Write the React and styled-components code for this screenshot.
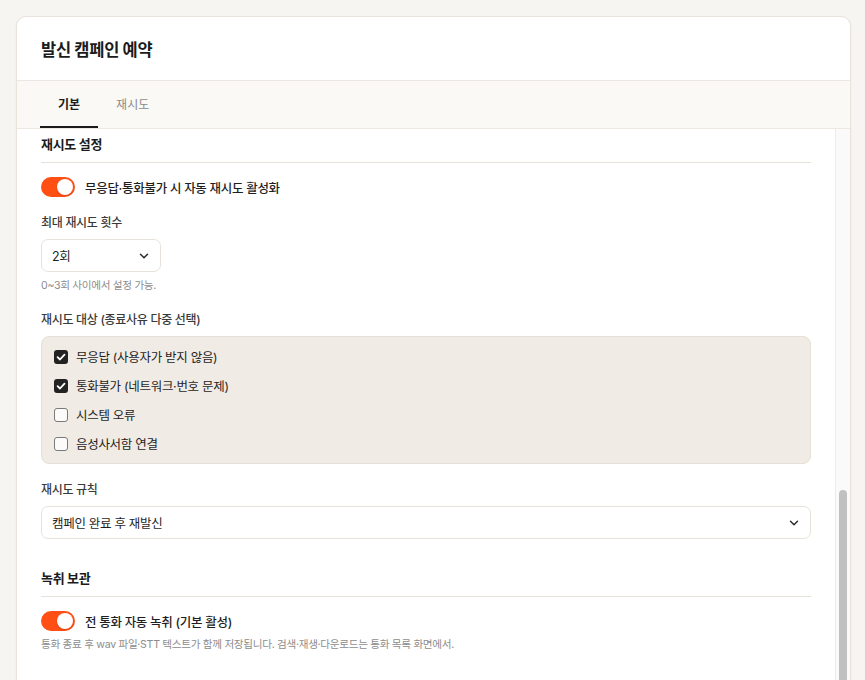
import React, { useCallback, useLayoutEffect, useRef, useState } from 'react';
import styled, { createGlobalStyle } from 'styled-components';
import { ChevronDown } from 'lucide-react';

const GlobalStyle = createGlobalStyle`
  * { box-sizing: border-box; }
  html, body { margin: 0; height: 100%; overflow: hidden; }
  body {
    background: #f6f5f1;
    font-family: Inter, "Noto Sans CJK KR", sans-serif;
    color: #222;
    letter-spacing: -0.3px;
    -webkit-font-smoothing: antialiased;
  }
`;

const Page = styled.div`
  padding: 16px 14px 16px 16px;
`;

const Card = styled.div`
  height: 780px;
  display: flex;
  flex-direction: column;
  background: #fff;
  border: 1px solid #e8e4dc;
  border-radius: 10px;
  overflow: hidden;
  box-shadow: 0 1px 3px rgba(60, 50, 30, 0.05);
`;

const Header = styled.header`
  flex: none;
  height: 64px;
  display: flex;
  align-items: center;
  padding: 0 24px;
  border-bottom: 1px solid #ece8e1;
`;

const Title = styled.h1`
  margin: 0;
  font-size: 16.5px;
  font-weight: 700;
  color: #1b1b1b;
`;

const TabBar = styled.nav`
  flex: none;
  height: 48px;
  display: flex;
  padding: 0 23px;
  background: #faf9f6;
  border-bottom: 1px solid #ece8e1;
`;

const Tab = styled.button`
  appearance: none;
  border: 0;
  background: none;
  margin: 0;
  padding: 0 18px;
  border-bottom: 2px solid ${(p) => (p.$active ? '#1b1b1b' : 'transparent')};
  font: inherit;
  font-size: 12px;
  font-weight: ${(p) => (p.$active ? 600 : 400)};
  color: ${(p) => (p.$active ? '#1b1b1b' : '#8b8b8b')};
  cursor: pointer;
`;

/* scroll area: the viewport plus a drawn scrollbar column */
const BodyWrap = styled.div`
  flex: 1;
  min-height: 0;
  display: flex;
`;

const Viewport = styled.div`
  flex: 1;
  min-width: 0;
  position: relative;
  overflow-y: auto;
  padding: 20px 24px 28px;
  scrollbar-width: none;
  &::-webkit-scrollbar {
    display: none;
  }
`;

const ScrollTrack = styled.div`
  flex: none;
  width: 15px;
  background: #fafafa;
  border-left: 1px solid #ececec;
`;

const ScrollThumb = styled.div`
  width: 8px;
  margin-left: 3px;
  border-radius: 4px;
  background: #c1c1c1;
`;

const Section = styled.section`
  & + & {
    margin-top: 29px;
  }
`;

const SectionTitle = styled.h2`
  margin: 0 0 14px;
  padding-bottom: 8px;
  border-bottom: 1px solid #e8e3da;
  font-size: 13px;
  line-height: 20px;
  font-weight: 700;
  color: #1b1b1b;
`;

const Stack = styled.div`
  display: flex;
  flex-direction: column;
  gap: 17px;
`;

const Field = styled.div`
  display: flex;
  flex-direction: column;
`;

const Row = styled.div`
  display: grid;
  grid-template-columns: 1fr 1fr;
  gap: 12px;
`;

const Label = styled.div`
  font-size: 12px;
  line-height: 18px;
  font-weight: 500;
  color: #3a3a3a;
  margin-bottom: 7px;
`;

const Control = styled.div`
  display: flex;
  align-items: center;
  justify-content: space-between;
  height: 33px;
  width: ${(p) => p.$width || '100%'};
  padding: 0 9px 0 10px;
  border: 1px solid #e8e3da;
  border-radius: 7px;
  background: #fff;
  font-size: 12.5px;
  color: #1f1f1f;
  svg {
    flex: none;
    color: #2a2a2a;
  }
`;

const Hint = styled.p`
  margin: 6px 0 0;
  font-size: 10.6px;
  line-height: 16px;
  color: #8d8d8d;
`;

const ToggleRow = styled.label`
  display: flex;
  align-items: center;
  gap: 10px;
  height: 20px;
  font-size: 12.5px;
  font-weight: 500;
  color: #1f1f1f;
  cursor: pointer;
`;

const Switch = styled.span`
  position: relative;
  flex: none;
  width: 34px;
  height: 20px;
  border-radius: 10px;
  background: ${(p) => (p.$on ? '#ff4f14' : '#d6d2ca')};

  &::after {
    content: '';
    position: absolute;
    top: 2px;
    left: ${(p) => (p.$on ? '16px' : '2px')};
    width: 16px;
    height: 16px;
    border-radius: 50%;
    background: #fff;
    box-shadow: 0 1px 2px rgba(0, 0, 0, 0.15);
  }
`;

const CheckGroup = styled.div`
  padding: 5px 12px;
  background: #f0ebe4;
  border: 1px solid #e6e0d6;
  border-radius: 8px;
`;

const CheckRow = styled.label`
  display: flex;
  align-items: center;
  gap: 8px;
  height: 29px;
  font-size: 12.5px;
  color: #1f1f1f;
  cursor: pointer;
`;

const CheckBox = styled.span`
  flex: none;
  width: 14px;
  height: 14px;
  border-radius: 3px;
  display: flex;
  align-items: center;
  justify-content: center;
  background: ${(p) => (p.$checked ? '#222' : '#fcfbf9')};
  border: ${(p) => (p.$checked ? 'none' : '1.5px solid #7a7a7a')};
`;

function Select({ value, width }) {
  return (
    <Control $width={width}>
      <span>{value}</span>
      <ChevronDown size={14} strokeWidth={2.5} />
    </Control>
  );
}

function Toggle({ on, children }) {
  return (
    <ToggleRow>
      <Switch $on={on} />
      <span>{children}</span>
    </ToggleRow>
  );
}

function Check({ checked, children }) {
  return (
    <CheckRow>
      <CheckBox $checked={checked}>
        {checked && (
          <svg width="10" height="10" viewBox="0 0 10 10">
            <path d="M1.6 5.2 L4 7.5 L8.5 2.6" fill="none" stroke="#fff" strokeWidth="1.8" strokeLinecap="round" strokeLinejoin="round" />
          </svg>
        )}
      </CheckBox>
      <span>{children}</span>
    </CheckRow>
  );
}

const retryReasons = [
  { label: '무응답 (사용자가 받지 않음)', checked: true },
  { label: '통화불가 (네트워크·번호 문제)', checked: true },
  { label: '시스템 오류', checked: false },
  { label: '음성사서함 연결', checked: false },
];

export default function App() {
  const [tab, setTab] = useState('basic');
  const [thumb, setThumb] = useState({ top: 0, height: 0 });
  const viewRef = useRef(null);
  const retryRef = useRef(null);

  const syncThumb = useCallback(() => {
    const el = viewRef.current;
    if (!el) return;
    const ratio = el.clientHeight / el.scrollHeight;
    setThumb({ top: el.scrollTop * ratio, height: el.clientHeight * ratio });
  }, []);

  const scrollToRetry = useCallback(() => {
    if (viewRef.current && retryRef.current) {
      viewRef.current.scrollTop = retryRef.current.offsetTop - 5;
    }
    syncThumb();
  }, [syncThumb]);

  useLayoutEffect(() => {
    scrollToRetry();
  }, [scrollToRetry]);

  return (
    <>
      <GlobalStyle />
      <Page>
        <Card>
          <Header>
            <Title>발신 캠페인 예약</Title>
          </Header>
          <TabBar>
            <Tab $active={tab === 'basic'} onClick={() => setTab('basic')}>기본</Tab>
            <Tab
              $active={tab === 'retry'}
              onClick={() => {
                setTab('retry');
                scrollToRetry();
              }}
            >
              재시도
            </Tab>
          </TabBar>
          <BodyWrap>
            <Viewport ref={viewRef} onScroll={syncThumb}>
              <Section>
                <SectionTitle>기본 정보</SectionTitle>
                <Stack>
                  <Field>
                    <Label>캠페인 이름</Label>
                    <Control>5월 회원 만족도 조사</Control>
                  </Field>
                  <Field>
                    <Label>발신 번호</Label>
                    <Select value="02-1588-0000 (대표번호)" />
                    <Hint>등록된 발신 번호만 선택할 수 있습니다.</Hint>
                  </Field>
                  <Field>
                    <Label>대상 고객 목록</Label>
                    <Select value="2024 VIP 고객 (1,240명)" />
                  </Field>
                </Stack>
              </Section>

              <Section>
                <SectionTitle>예약 일시</SectionTitle>
                <Stack>
                  <Row>
                    <Field>
                      <Label>시작 일자</Label>
                      <Control>2024-05-20</Control>
                    </Field>
                    <Field>
                      <Label>시작 시간</Label>
                      <Select value="오전 10:00" />
                    </Field>
                  </Row>
                  <Row>
                    <Field>
                      <Label>발신 가능 시작</Label>
                      <Select value="오전 09:00" />
                    </Field>
                    <Field>
                      <Label>발신 가능 종료</Label>
                      <Select value="오후 06:00" />
                    </Field>
                  </Row>
                  <Field>
                    <Label>동시 발신 수</Label>
                    <Select value="10회선" width="120px" />
                    <Hint>계약된 회선 수를 넘을 수 없습니다.</Hint>
                  </Field>
                </Stack>
              </Section>

              <Section>
                <SectionTitle>상담 시나리오</SectionTitle>
                <Stack>
                  <Field>
                    <Toggle on>AI 상담원 응대 사용</Toggle>
                    <Hint>연결 즉시 AI 상담원이 시나리오에 따라 응대합니다.</Hint>
                  </Field>
                  <Field>
                    <Label>시나리오</Label>
                    <Select value="만족도 조사 기본형" />
                  </Field>
                </Stack>
              </Section>

              <Section ref={retryRef}>
                <SectionTitle>재시도 설정</SectionTitle>
                <Stack>
                  <Toggle on>무응답·통화불가 시 자동 재시도 활성화</Toggle>
                  <Field>
                    <Label>최대 재시도 횟수</Label>
                    <Select value="2회" width="120px" />
                    <Hint>0~3회 사이에서 설정 가능.</Hint>
                  </Field>
                  <Field>
                    <Label>재시도 대상 (종료사유 다중 선택)</Label>
                    <CheckGroup>
                      {retryReasons.map((r) => (
                        <Check key={r.label} checked={r.checked}>{r.label}</Check>
                      ))}
                    </CheckGroup>
                  </Field>
                  <Field>
                    <Label>재시도 규칙</Label>
                    <Select value="캠페인 완료 후 재발신" />
                  </Field>
                </Stack>
              </Section>

              <Section>
                <SectionTitle>녹취 보관</SectionTitle>
                <Field>
                  <Toggle on>전 통화 자동 녹취 (기본 활성)</Toggle>
                  <Hint>통화 종료 후 wav 파일·STT 텍스트가 함께 저장됩니다. 검색·재생·다운로드는 통화 목록 화면에서.</Hint>
                </Field>
              </Section>

              <Section>
                <SectionTitle>알림</SectionTitle>
                <Field>
                  <Label>완료 알림 수신</Label>
                  <Select value="이메일 및 문자" />
                </Field>
              </Section>
            </Viewport>
            <ScrollTrack>
              <ScrollThumb style={{ marginTop: thumb.top, height: thumb.height }} />
            </ScrollTrack>
          </BodyWrap>
        </Card>
      </Page>
    </>
  );
}
